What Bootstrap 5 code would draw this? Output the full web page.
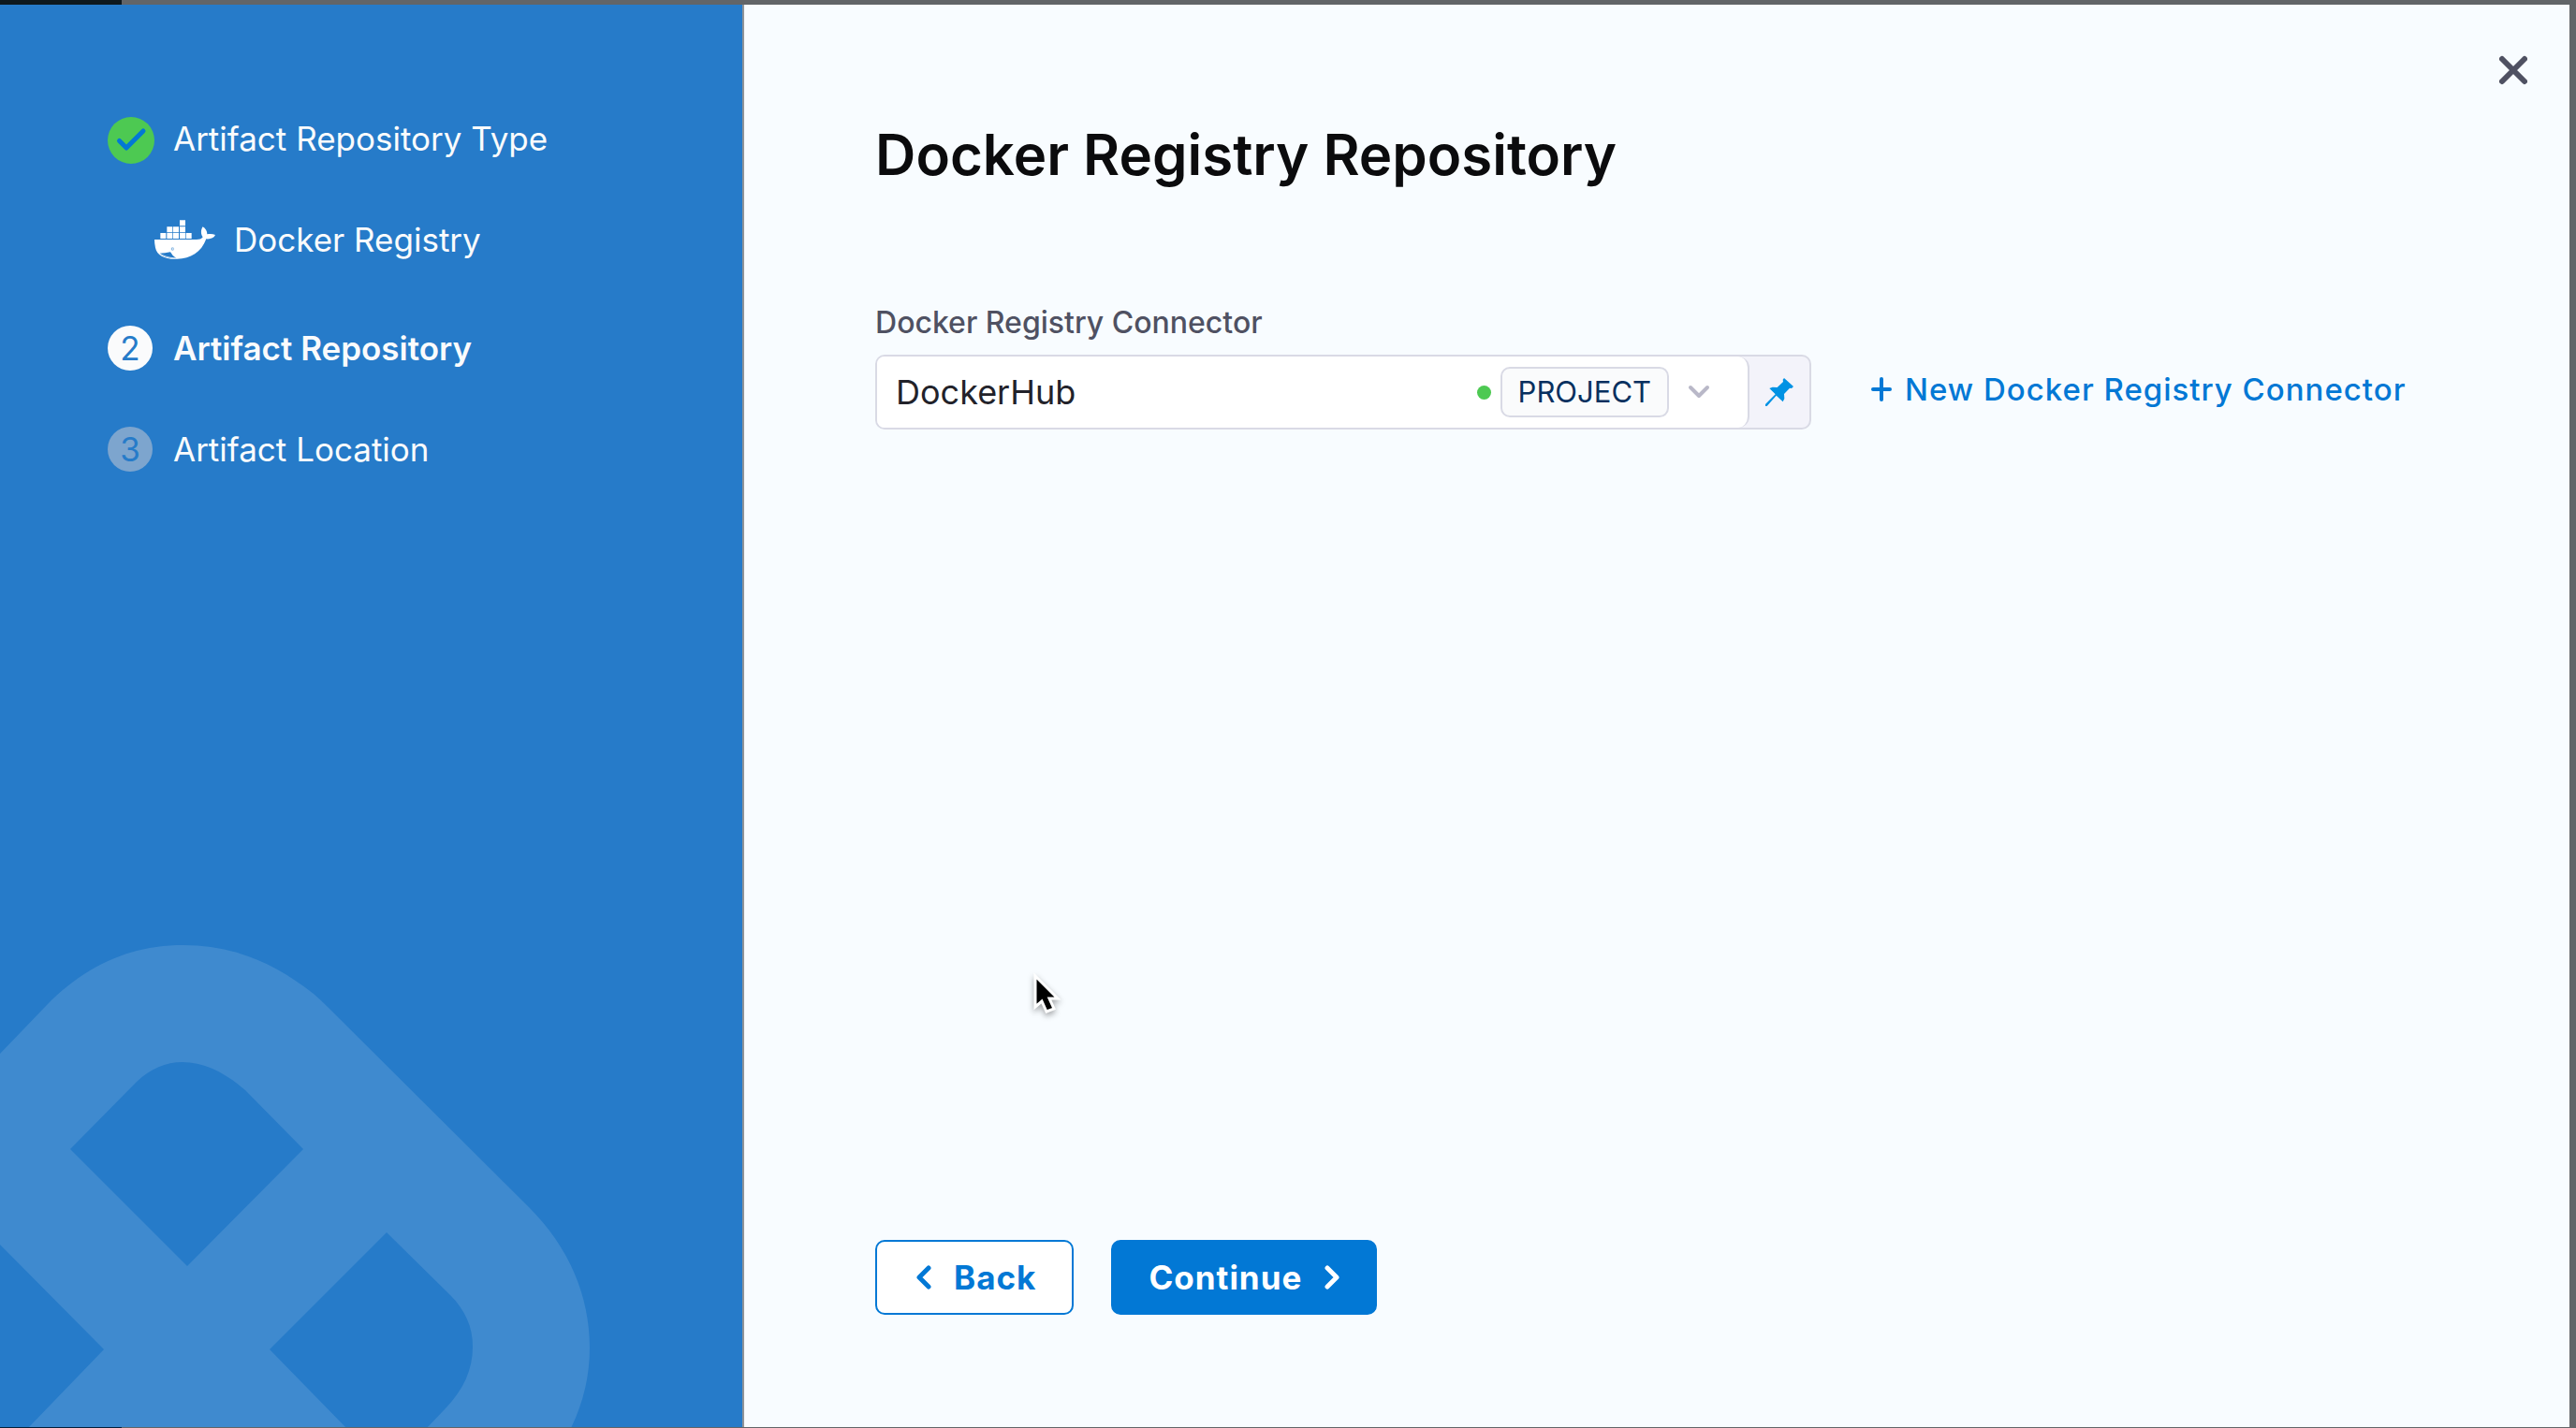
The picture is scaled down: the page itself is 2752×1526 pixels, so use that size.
<!DOCTYPE html>
<html lang="en">
<head>
<meta charset="utf-8">
<meta name="viewport" content="width=device-width, initial-scale=1">
<title>Docker Registry Repository</title>
<link href="https://cdn.jsdelivr.net/npm/bootstrap@5.3.0/dist/css/bootstrap.min.css" rel="stylesheet">
<style>
  :root { --accent: #0278d5; --line: #d9dae5; --paper: #f8fcff; }
  body { background: #626568; font-family: Inter, "Liberation Sans", sans-serif; }
  .top-strip { height: 5px; background: linear-gradient(to right, #0e191e 130px, #626568 130px); }
  .bottom-strip { height: 1px; background: linear-gradient(to right, #04203a 130px, #626568 130px); }
  .wizard { margin-right: 7px; min-height: 0; }

  /* Step rail */
  .rail { width: calc(29% - 1px); background: #267bc9; border-right: 2px solid #909498; color: #fafbfc; overflow: hidden; }
  .rail ol { padding: 118px 24px 0 115px; font-size: 35px; line-height: 48px; }
  .rail li { height: 50px; }
  .rail li + li { margin-top: 58px; }
  .rail li.sub-step { margin-left: 50px; }
  .rail li.current { margin-top: 66px; }
  .step-badge { width: 48px; height: 48px; border-radius: 50%; background: #fafbfc; color: #267bc9; text-align: center; line-height: 49px; margin-right: 22px; }
  .step-badge.waiting { background: #7da5ce; }
  .step-done { margin-right: 20px; margin-top: 4px; }
  .whale { margin-right: 20px; }
  .watermark { position: absolute; left: 0; bottom: -1px; width: 631px; height: 516px; }

  /* Main pane */
  .pane { background: var(--paper); padding: 120px 168px 120px 140px; }
  .close-btn { position: absolute; top: 50px; right: 45px; line-height: 0; }
  h1 { font-size: 60px; line-height: 80px; font-weight: 600; color: #0b0b0d; }
  .connector-label { font-size: 32px; line-height: 40px; font-weight: 500; color: #4f5162; margin: 120px 0 14px; }
  .connector-row { gap: 64px; }
  .connector-box { flex: 0 1 1000px; height: 80px; border: 2px solid var(--line); border-radius: 10px; background: #f3f3fa; overflow: hidden; }
  .connector-value { background: #fff; border-right: 2px solid var(--line); border-radius: 0 12px 12px 0; padding-right: 40px; }
  .connector-value select { appearance: none; border: 0; background: transparent; font-size: 36px; color: #22222a; padding: 0 0 0 20px; outline: 0; }
  .status-dot { width: 15px; height: 15px; border-radius: 50%; background: #4dc952; margin-right: 10px; }
  .scope-tag { height: 54px; padding: 0 17px; border: 2px solid var(--line); border-radius: 10px; background: #fafbfc; color: #07305f; font-size: 31px; line-height: 50px; margin-right: 20px; }
  .pin-btn { width: 64px; }
  .new-link { font-size: 33px; line-height: 40px; font-weight: 500; letter-spacing: 1px; color: var(--accent); gap: 14px; margin-bottom: 6px; }
  .nav-row { gap: 40px; }
  .nav-btn { height: 80px; border: 2px solid var(--accent); border-radius: 10px; font-size: 35px; font-weight: 700; letter-spacing: 1px; padding: 0 38px; --bs-btn-color: var(--accent); --bs-btn-bg: #fff; --bs-btn-hover-bg: #eef7ff; --bs-btn-hover-color: var(--accent); }
  .nav-btn.go { --bs-btn-color: #fff; --bs-btn-bg: var(--accent); --bs-btn-hover-bg: #0268ba; --bs-btn-hover-color: #fff; }
  .pointer { position: absolute; left: 1101px; top: 1038px; pointer-events: none; filter: drop-shadow(0 3px 3px rgba(0,0,0,.35)); }
</style>
</head>
<body>
<div class="vh-100 d-flex flex-column">
  <div class="top-strip flex-shrink-0"></div>
  <div class="wizard d-flex flex-grow-1">
    <aside class="rail position-relative flex-shrink-0">
      <svg class="watermark" viewBox="0 1010 631 516" fill="#3f8acf" fill-rule="evenodd" aria-hidden="true">
        <path d="M0 1126 L50 1074 C92 1031 140 1010 196 1010 C248 1010 292 1028 335 1062 Q342 1068 350 1076 L565 1290 C608 1333 630 1385 630 1440 Q630 1485 610 1526 L456 1526 L476 1505 C495 1485 505 1464 505 1439 C505 1418 497 1400 481 1384 L413 1317 L288 1442 L370 1526 L30 1526 L111 1442 L0 1330 Z
          M75 1228 L200 1353 L324 1228 L262 1165 C240 1146 218 1135 195 1135 C177 1135 161 1142 146 1156 Z"/>
      </svg>
      <ol class="list-unstyled position-relative m-0">
        <li class="d-flex align-items-center">
          <svg class="step-done" width="50" height="50" viewBox="0 0 50 50" aria-hidden="true"><circle cx="25" cy="25" r="25" fill="#4dc952"/><path d="M12.500 25.500 20 33 38 15" fill="none" stroke="#0278d5" stroke-width="5" stroke-linecap="round" stroke-linejoin="round"/></svg>
          <span>Artifact Repository Type</span>
        </li>
        <li class="sub-step d-flex align-items-center">
          <svg class="whale" width="65" height="42" viewBox="195 377 195 126" fill="#fff" aria-hidden="true">
            <path d="M276 378h18v18h-18zM235 399h18v18h-18zM255 399h18v18h-18zM276 399h18v18h-18zM214 419h18v18h-18zM235 419h18v18h-18zM255 419h18v18h-18zM276 419h18v18h-18zM296 419h18v18h-18z"/>
            <path d="M195 440H330C340 440 348 437 350 432C343 423 343 409 350 399C359 404 364 413 364 423C372 421 382 421 390 425C386 435 375 439 361 438C345 481 311 502 268 502C230 504 203 492 198 466Q195 454 195 440Z"/>
            <path d="M211 484Q230 484 246 480Q252 492 264 499Q229 501 211 484Z" fill="#267bc9"/>
            <path d="M209 483Q229 497 262 500" fill="none" stroke="#fff" stroke-width="2"/>
            <circle cx="253" cy="470" r="5" fill="#8bb8e2"/><circle cx="254" cy="470" r="2"/>
          </svg>
          <span>Docker Registry</span>
        </li>
        <li class="current d-flex align-items-center"><span class="step-badge">2</span><strong class="fw-semibold">Artifact Repository</strong></li>
        <li class="d-flex align-items-center"><span class="step-badge waiting">3</span><span>Artifact Location</span></li>
      </ol>
    </aside>

    <main class="pane position-relative flex-grow-1 d-flex flex-column">
      <button type="button" class="close-btn btn p-0 border-0" aria-label="Close">
        <svg width="30" height="40" viewBox="0 0 30 40"><path d="M3 8 27 32M27 8 3 32" stroke="#4f5162" stroke-width="6" stroke-linecap="round"/></svg>
      </button>
      <h1 class="m-0">Docker Registry Repository</h1>
      <form class="d-flex flex-column flex-grow-1">
        <label class="connector-label" for="connector">Docker Registry Connector</label>
        <div class="connector-row d-flex align-items-center">
          <div class="connector-box d-flex">
            <div class="connector-value d-flex align-items-center flex-grow-1">
              <select id="connector" class="flex-grow-1"><option>DockerHub</option></select>
              <span class="status-dot"></span>
              <span class="scope-tag">PROJECT</span>
              <svg width="24" height="16" viewBox="0 0 24 16" fill="none" stroke="#b9b8c8" stroke-width="4" stroke-linecap="round" stroke-linejoin="round" aria-hidden="true"><path d="M3 3 12 12 21 3"/></svg>
            </div>
            <button type="button" class="pin-btn btn p-0 border-0" aria-label="Pin value type">
              <svg width="30" height="30" viewBox="0 0 90 90" fill="#0092e4"><path d="M60 0 90 27 84 33 78 32 60 51 61 66 56 76 35 56 5 90 0 90 0 84 32 52 13 33 23 29 38 30 57 12 56 5Z"/></svg>
            </button>
          </div>
          <a href="#" class="new-link d-flex align-items-center text-decoration-none">
            <svg width="22" height="26" viewBox="0 0 22 26" stroke="#0278d5" stroke-width="4" stroke-linecap="round" aria-hidden="true"><path d="M2 13H20M11 2V24"/></svg>
            <span>New Docker Registry Connector</span>
          </a>
        </div>
        <div class="nav-row d-flex mt-auto">
          <button type="button" class="nav-btn btn d-flex align-items-center">
            <svg class="ms-1 me-4" width="16" height="28" viewBox="0 0 16 28" fill="none" stroke="currentColor" stroke-width="5" stroke-linecap="round" stroke-linejoin="round" aria-hidden="true"><path d="M13 4 3 14 13 24"/></svg>Back
          </button>
          <button type="submit" class="nav-btn go btn d-flex align-items-center">Continue
            <svg class="ms-4" width="16" height="28" viewBox="0 0 16 28" fill="none" stroke="currentColor" stroke-width="5" stroke-linecap="round" stroke-linejoin="round" aria-hidden="true"><path d="M3 4 13 14 3 24"/></svg>
          </button>
        </div>
      </form>
    </main>
  </div>
  <div class="bottom-strip flex-shrink-0"></div>
</div>
<svg class="pointer" width="34" height="46" viewBox="0 0 34 46" aria-hidden="true"><path d="M5 5V38L12 32 17 43 25 40 20 29H29Z" fill="#000" stroke="#fff" stroke-width="3"/></svg>
<script src="https://cdn.jsdelivr.net/npm/bootstrap@5.3.0/dist/js/bootstrap.bundle.min.js"></script>
</body>
</html>
